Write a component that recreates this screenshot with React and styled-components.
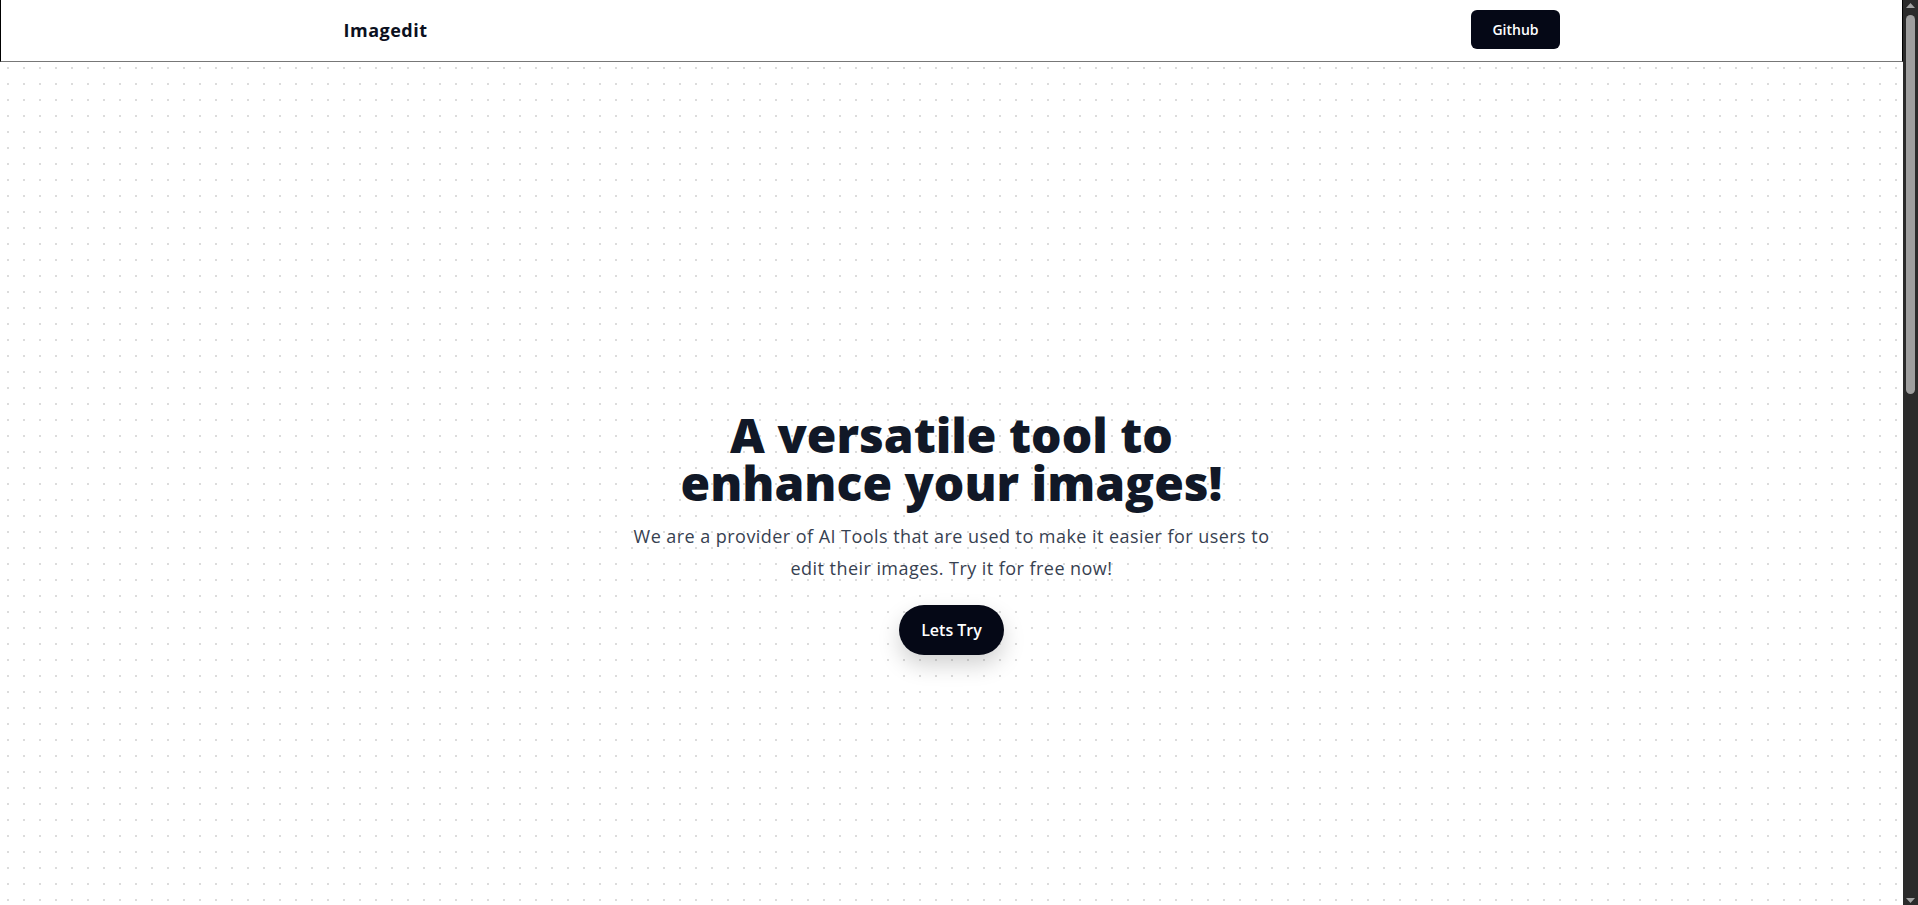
import styled, { createGlobalStyle } from "styled-components";

const GlobalStyle = createGlobalStyle`
  html,
  body {
    margin: 0;
    height: 100%;
    overflow: hidden;
    background: #ffffff;
  }
  body {
    color: #111827;
    font-family: "Open Sans", "Noto Sans", sans-serif;
  }
  * {
    box-sizing: border-box;
  }
`;

const Shell = styled.div`
  display: flex;
  height: 100vh;
`;

const Main = styled.div`
  flex: 1;
  min-width: 0;
  overflow: hidden;
`;

// window scrollbar, drawn since the headless shot hides native ones
const ScrollRail = styled.div`
  width: 15px;
  flex-shrink: 0;
  background: #2b2b2b;
  display: flex;
  flex-direction: column;
  align-items: center;
  padding: 3px 0 2px;
`;

const Arrow = styled.svg`
  width: 9px;
  height: 5px;
  display: block;
  fill: #a3a3a3;
  transform: ${(p) => (p.$down ? "rotate(180deg)" : "none")};
`;

const Thumb = styled.div`
  width: 9px;
  height: 379px;
  margin-top: 7px;
  border-radius: 5px;
  background: #9f9f9f;
`;

const RailGap = styled.div`
  flex: 1;
`;

const Page = styled.div`
  min-height: 2092px;
  background-color: #ffffff;
  background-image: radial-gradient(circle, #dcdcdc 1px, transparent 1.2px);
  background-size: 16px 16px;
  background-position: 0 12px;
`;

const Header = styled.header`
  background: #ffffff;
  border-left: 1px solid #000000;
  border-right: 1px solid #000000;
  border-bottom: 1px solid #777777;
`;

const HeaderInner = styled.div`
  max-width: 1280px;
  margin: 0 auto;
  padding: 10px 32px 12px;
  display: flex;
  align-items: center;
  justify-content: space-between;
`;

const Logo = styled.span`
  font-size: 18px;
  font-weight: 700;
  color: #0b1020;
  letter-spacing: 0.5px;
`;

const GithubButton = styled.button`
  height: 39px;
  padding: 0 21px;
  border: none;
  border-radius: 6px;
  background: #050816;
  color: #ffffff;
  font-family: inherit;
  font-size: 14px;
  font-weight: 600;
  cursor: pointer;
`;

const Hero = styled.section`
  min-height: 905px;
  padding-top: 36px;
  display: flex;
  flex-direction: column;
  align-items: center;
  justify-content: center;
  text-align: center;
`;

const Title = styled.h1`
  margin: 0;
  font-size: 48px;
  line-height: 48px;
  font-weight: 800;
  color: #111827;
`;

const Lead = styled.p`
  margin: 13px 0 0;
  font-size: 18px;
  line-height: 32px;
  letter-spacing: 0.45px;
  color: #374151;
`;

const TryButton = styled.button`
  margin-top: 21px;
  height: 50px;
  padding: 0 22px;
  border: none;
  border-radius: 999px;
  background: #050816;
  color: #ffffff;
  font-family: inherit;
  font-size: 16px;
  font-weight: 600;
  box-shadow: 0 10px 22px rgba(0, 0, 0, 0.18);
  cursor: pointer;
`;

function RailArrow({ down }) {
  return (
    <Arrow $down={down} viewBox="0 0 9 5">
      <polygon points="4.5,0 9,5 0,5" />
    </Arrow>
  );
}

export default function App() {
  return (
    <>
      <GlobalStyle />
      <Shell>
        <Main>
          <Page>
            <Header>
              <HeaderInner>
                <Logo>Imagedit</Logo>
                <GithubButton>Github</GithubButton>
              </HeaderInner>
            </Header>
            <Hero>
              <Title>
                A versatile tool to
                <br />
                enhance your images!
              </Title>
              <Lead>
                We are a provider of AI Tools that are used to make it easier for users to
                <br />
                edit their images. Try it for free now!
              </Lead>
              <TryButton>Lets Try</TryButton>
            </Hero>
          </Page>
        </Main>
        <ScrollRail>
          <RailArrow />
          <Thumb />
          <RailGap />
          <RailArrow down />
        </ScrollRail>
      </Shell>
    </>
  );
}
